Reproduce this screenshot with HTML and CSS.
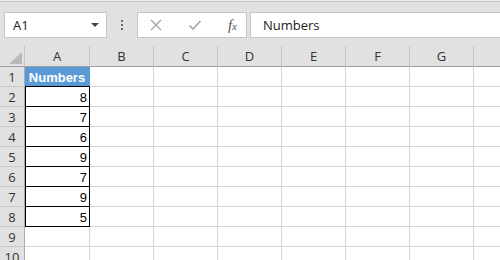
FILE: index.html
```html
<!DOCTYPE html>
<html lang="en">
<head>
    <meta charset="UTF-8">
    <title>Numbers</title>
    <link rel="stylesheet" href="styles.css">
</head>
<body>

    <!-- Barra de fórmulas -->
    <div class="toolbar">
        <div class="name-box">
            <span>A1</span>
            <svg class="drop" width="8" height="4" viewBox="0 0 8 4"><path d="M0 0h8L4 4z" fill="#444"/></svg>
        </div>
        <div class="grip">
            <i></i><i></i><i></i>
        </div>
        <div class="fx-box">
            <svg width="12" height="12" viewBox="0 0 12 12"><path d="M1 1l10 10M11 1L1 11" stroke="#a6a6a6" stroke-width="1.4"/></svg>
            <svg width="14" height="12" viewBox="0 0 14 12"><path d="M1.5 6.5l3.5 3.5L12.5 2" stroke="#a6a6a6" stroke-width="1.6" fill="none"/></svg>
            <span class="fx">f<small>x</small></span>
        </div>
        <div class="formula">Numbers</div>
    </div>

    <!-- Planilha -->
    <table class="sheet">
        <colgroup>
            <col class="c-row"><col class="c-a"><col class="c-std"><col class="c-std"><col class="c-std"><col class="c-std"><col class="c-std"><col class="c-std"><col>
        </colgroup>
        <thead>
            <tr>
                <th class="corner"><svg width="13" height="12" viewBox="0 0 13 12"><path d="M13 0V12H0z" fill="#b9b9b9"/></svg></th>
                <th>A</th><th>B</th><th>C</th><th>D</th><th>E</th><th>F</th><th>G</th><th></th>
            </tr>
        </thead>
        <tbody>
            <tr><th>1</th><td class="title">Numbers</td><td></td><td></td><td></td><td></td><td></td><td></td><td></td></tr>
            <tr><th>2</th><td class="num">8</td><td></td><td></td><td></td><td></td><td></td><td></td><td></td></tr>
            <tr><th>3</th><td class="num">7</td><td></td><td></td><td></td><td></td><td></td><td></td><td></td></tr>
            <tr><th>4</th><td class="num">6</td><td></td><td></td><td></td><td></td><td></td><td></td><td></td></tr>
            <tr><th>5</th><td class="num">9</td><td></td><td></td><td></td><td></td><td></td><td></td><td></td></tr>
            <tr><th>6</th><td class="num">7</td><td></td><td></td><td></td><td></td><td></td><td></td><td></td></tr>
            <tr><th>7</th><td class="num">9</td><td></td><td></td><td></td><td></td><td></td><td></td><td></td></tr>
            <tr><th>8</th><td class="num">5</td><td></td><td></td><td></td><td></td><td></td><td></td><td></td></tr>
            <tr><th>9</th><td></td><td></td><td></td><td></td><td></td><td></td><td></td><td></td></tr>
            <tr><th>10</th><td></td><td></td><td></td><td></td><td></td><td></td><td></td><td></td></tr>
        </tbody>
    </table>

</body>
</html>
```

FILE: styles.css
```css
body {
    margin: 0;
    background-color: #e1e1e1;
    font-family: "Liberation Sans", Arial, sans-serif;
    overflow: hidden;
    height: 260px;
    border-top: 1px solid #ececec;
}

.toolbar {
    display: flex;
    align-items: center;
    border-top: 1px solid #c6c6c6;
    padding: 10px 0 8px 4px;
    font-family: "Open Sans", sans-serif;
    font-size: 13px;
    color: #222;
}

.name-box {
    width: 103px;
    height: 26px;
    box-sizing: border-box;
    background-color: #fff;
    border: 1px solid #c6c6c6;
    display: flex;
    align-items: center;
    justify-content: space-between;
    padding: 0 7px 0 8px;
}

.grip {
    width: 30px;
    display: flex;
    flex-direction: column;
    align-items: center;
    gap: 2px;
}

.grip i {
    width: 2px;
    height: 2px;
    background-color: #6a6a6a;
}

.fx-box {
    width: 110px;
    height: 26px;
    box-sizing: border-box;
    background-color: #fff;
    border: 1px solid #c6c6c6;
    display: flex;
    align-items: center;
    justify-content: space-between;
    padding: 0 9px 0 12px;
}

.fx {
    font-family: "Liberation Serif", serif;
    font-style: italic;
    font-size: 15px;
    color: #555;
}

.fx small {
    font-size: 11px;
}

.formula {
    flex: 1;
    height: 26px;
    box-sizing: border-box;
    margin-left: 3px;
    margin-right: -2px;
    background-color: #fff;
    border: 1px solid #c6c6c6;
    padding-left: 12px;
    line-height: 24px;
}

/* Planilha */
.sheet {
    border-collapse: separate;
    border-spacing: 0;
    table-layout: fixed;
    width: 560px;
    background-color: #fff;
}

.c-row { width: 25px; }
.c-a { width: 65px; }
.c-std { width: 64px; }

.sheet th {
    background-color: #e1e1e1;
    font-family: "Open Sans", sans-serif;
    font-weight: normal;
    font-size: 13px;
    color: #333;
    padding: 0;
}

.sheet thead th {
    height: 20px;
    border-bottom: 1px solid #9f9f9f;
    border-right: 1px solid #c4c4c4;
    line-height: 20px;
}

.sheet thead .corner {
    text-align: right;
    vertical-align: bottom;
    line-height: 0;
    padding: 0 2px 2px 0;
    height: 18px;
}

.sheet tbody th {
    height: 19px;
    border-bottom: 1px solid #c8c8c8;
    border-right: 1px solid #ababab;
    line-height: 18px;
    overflow: hidden;
}

.sheet td {
    height: 19px;
    padding: 0 2px;
    border-right: 1px solid #d4d4d4;
    border-bottom: 1px solid #d4d4d4;
    font-size: 13px;
    line-height: 17px;
    color: #000;
    vertical-align: bottom;
    overflow: hidden;
}

.sheet .title {
    background-color: #5b9bd5;
    color: #fff;
    font-weight: bold;
    text-align: center;
    border-right-color: #5b9bd5;
    border-bottom-color: #000;
}

.sheet .num {
    text-align: right;
    border-right-color: #000;
    border-bottom-color: #000;
    box-shadow: inset 1px 0 0 #000;
}
```
